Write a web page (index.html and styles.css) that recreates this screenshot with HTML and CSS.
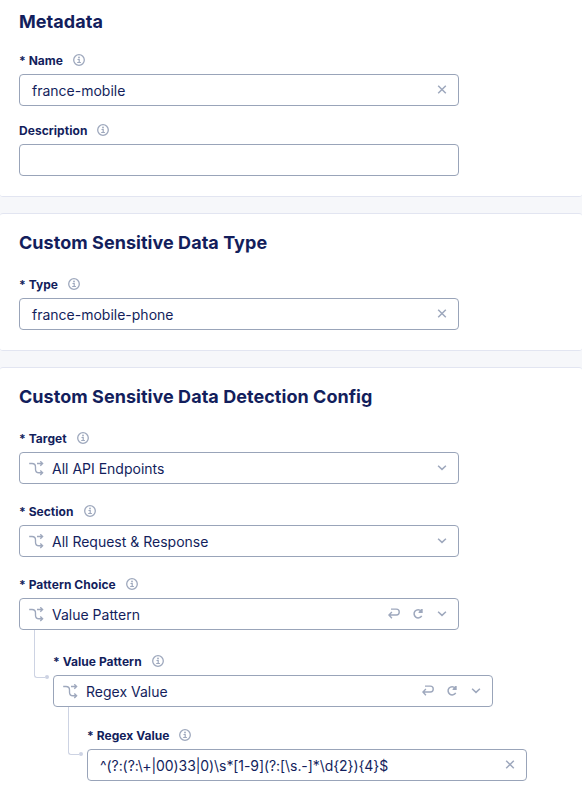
FILE: index.html
```html
<!DOCTYPE html>
<html lang="en">
<head>
<meta charset="utf-8">
<title>Custom Sensitive Data</title>
<link rel="stylesheet" href="styles.css">
</head>
<body>
<svg class="defs" width="0" height="0" aria-hidden="true">
  <symbol id="info" viewBox="0 0 12 12"><circle cx="6" cy="6" r="5.3" fill="none" stroke="currentColor" stroke-width="1.3"/><circle cx="6" cy="3.5" r=".9" fill="currentColor"/><path d="M4.5 5.5H6.2V8.5M4.2 8.5H7.9" fill="none" stroke="currentColor" stroke-width="1.2"/></symbol>
  <symbol id="close" viewBox="0 0 12 12"><path d="M2.2 1.7l7.6 7.6M9.8 1.7l-7.6 7.6" fill="none" stroke="currentColor" stroke-width="1.5"/></symbol>
  <symbol id="down" viewBox="0 0 12 12"><path d="M2.1 3.7l3.9 3.7 3.9-3.7" fill="none" stroke="currentColor" stroke-width="1.5"/></symbol>
  <symbol id="branch" viewBox="0 0 15 15"><path d="M.2 2.5H3Q6.5 2.5 6.5 6V8.2Q6.5 11.7 10 11.7H13.4M8 2.5H13.4M11.3 .3L13.6 2.5 11.3 4.7M11.3 9.5L13.6 11.7 11.3 13.9" fill="none" stroke="currentColor" stroke-width="1.35"/></symbol>
  <symbol id="back" viewBox="0 0 12 12"><path d="M3 1.1H8.3A2.9 2.9 0 0 1 8.3 7H.9M3.9 4.1L.9 7 3.9 10.3" fill="none" stroke="currentColor" stroke-width="1.4"/></symbol>
  <symbol id="reload" viewBox="0 0 12 12"><path d="M9.7 7.9A4.1 4.1 0 1 1 9.2 3" fill="none" stroke="currentColor" stroke-width="1.5"/><path d="M10.7 .9V5H6.6V3.9L9.3 .9Z" fill="currentColor"/></symbol>
</svg>
<main>
  <section class="card first">
    <h2>Metadata</h2>
    <div class="field">
      <label>* Name <svg class="info"><use href="#info"/></svg></label>
      <div class="input"><span>france-mobile</span><svg class="action"><use href="#close"/></svg></div>
    </div>
    <div class="field">
      <label>Description <svg class="info"><use href="#info"/></svg></label>
      <div class="input"></div>
    </div>
  </section>
  <section class="card">
    <h2>Custom Sensitive Data Type</h2>
    <div class="field">
      <label>* Type <svg class="info"><use href="#info"/></svg></label>
      <div class="input"><span>france-mobile-phone</span><svg class="action"><use href="#close"/></svg></div>
    </div>
  </section>
  <section class="card config">
    <h2>Custom Sensitive Data Detection Config</h2>
    <div class="field">
      <label>* Target <svg class="info"><use href="#info"/></svg></label>
      <div class="input select"><svg class="branch"><use href="#branch"/></svg><span>All API Endpoints</span><svg class="action"><use href="#down"/></svg></div>
    </div>
    <div class="field">
      <label>* Section <svg class="info"><use href="#info"/></svg></label>
      <div class="input select"><svg class="branch"><use href="#branch"/></svg><span>All Request &amp; Response</span><svg class="action"><use href="#down"/></svg></div>
    </div>
    <div class="field">
      <label>* Pattern Choice <svg class="info"><use href="#info"/></svg></label>
      <div class="input select"><svg class="branch"><use href="#branch"/></svg><span>Value Pattern</span><svg class="action"><use href="#back"/></svg><svg class="action"><use href="#reload"/></svg><svg class="action"><use href="#down"/></svg></div>
      <div class="nested">
        <div class="field">
          <label>* Value Pattern <svg class="info"><use href="#info"/></svg></label>
          <div class="input select"><svg class="branch"><use href="#branch"/></svg><span>Regex Value</span><svg class="action"><use href="#back"/></svg><svg class="action"><use href="#reload"/></svg><svg class="action"><use href="#down"/></svg></div>
          <div class="nested deep">
            <div class="field">
              <label>* Regex Value <svg class="info"><use href="#info"/></svg></label>
              <div class="input regex"><span>^(?:(?:\+|00)33|0)\s*[1-9](?:[\s.-]*\d{2}){4}$</span><svg class="action"><use href="#close"/></svg></div>
            </div>
          </div>
        </div>
      </div>
    </div>
  </section>
</main>
</body>
</html>
```
FILE: styles.css
```css
* { box-sizing: border-box; }
body {
  margin: 0;
  background: #f6f7fa;
  color: #131e5c;
  font-family: Inter, sans-serif;
  font-size: 14px;
}
.defs { position: absolute; }
main { display: flex; flex-direction: column; gap: 16px; min-height: 798px; }
.card {
  background: #fff;
  border-top: 1px solid #e2e5f1;
  border-bottom: 1px solid #e2e5f1;
  border-radius: 3px;
  padding: 17px 19px 20px;
}
.card.first { border-top: 0; padding-top: 10px; border-radius: 0 0 3px 3px; }
.config { flex: 1; border-bottom: 0; padding-bottom: 0; border-radius: 3px 3px 0 0; }
h2 { margin: 0 0 21px; font-size: 18px; line-height: 24px; font-weight: 700; letter-spacing: .045px; }
.first h2 { margin-bottom: 18px; }
.field + .field { margin-top: 16px; }
.config > .field + .field { margin-top: 19px; }
label {
  display: flex;
  align-items: center;
  gap: 10px;
  height: 16px;
  margin-bottom: 6px;
  font-size: 12px;
  font-weight: 700;
  letter-spacing: .05px;
  white-space: nowrap;
}
svg { flex: none; color: #9ea8bd; }
.info { width: 12px; height: 12px; }
.input {
  display: flex;
  align-items: center;
  gap: 12px;
  width: 440px;
  height: 32px;
  padding: 0 10px 0 12px;
  border: 1px solid #99a4b9;
  border-radius: 4px;
}
.input span { flex: 1; white-space: nowrap; line-height: 20px; position: relative; top: 1px; }
.regex span { letter-spacing: -.075px; }
.select { padding-left: 9px; }
.branch { width: 15px; height: 15px; margin-right: -4px; }
.action { width: 12px; height: 12px; }
.nested { position: relative; padding: 23px 0 0 34px; }
.nested.deep { padding-top: 20px; }
.nested::before {
  content: "";
  position: absolute;
  left: 15px;
  top: 0;
  width: 10px;
  height: 47px;
  border: solid #cdd3e3;
  border-width: 0 0 1px 1px;
  border-bottom-left-radius: 3px;
}
.nested::after {
  content: "";
  position: absolute;
  left: 26px;
  top: 45px;
  width: 4px;
  height: 4px;
  border-radius: 50%;
  background: #cdd3e3;
}
```
